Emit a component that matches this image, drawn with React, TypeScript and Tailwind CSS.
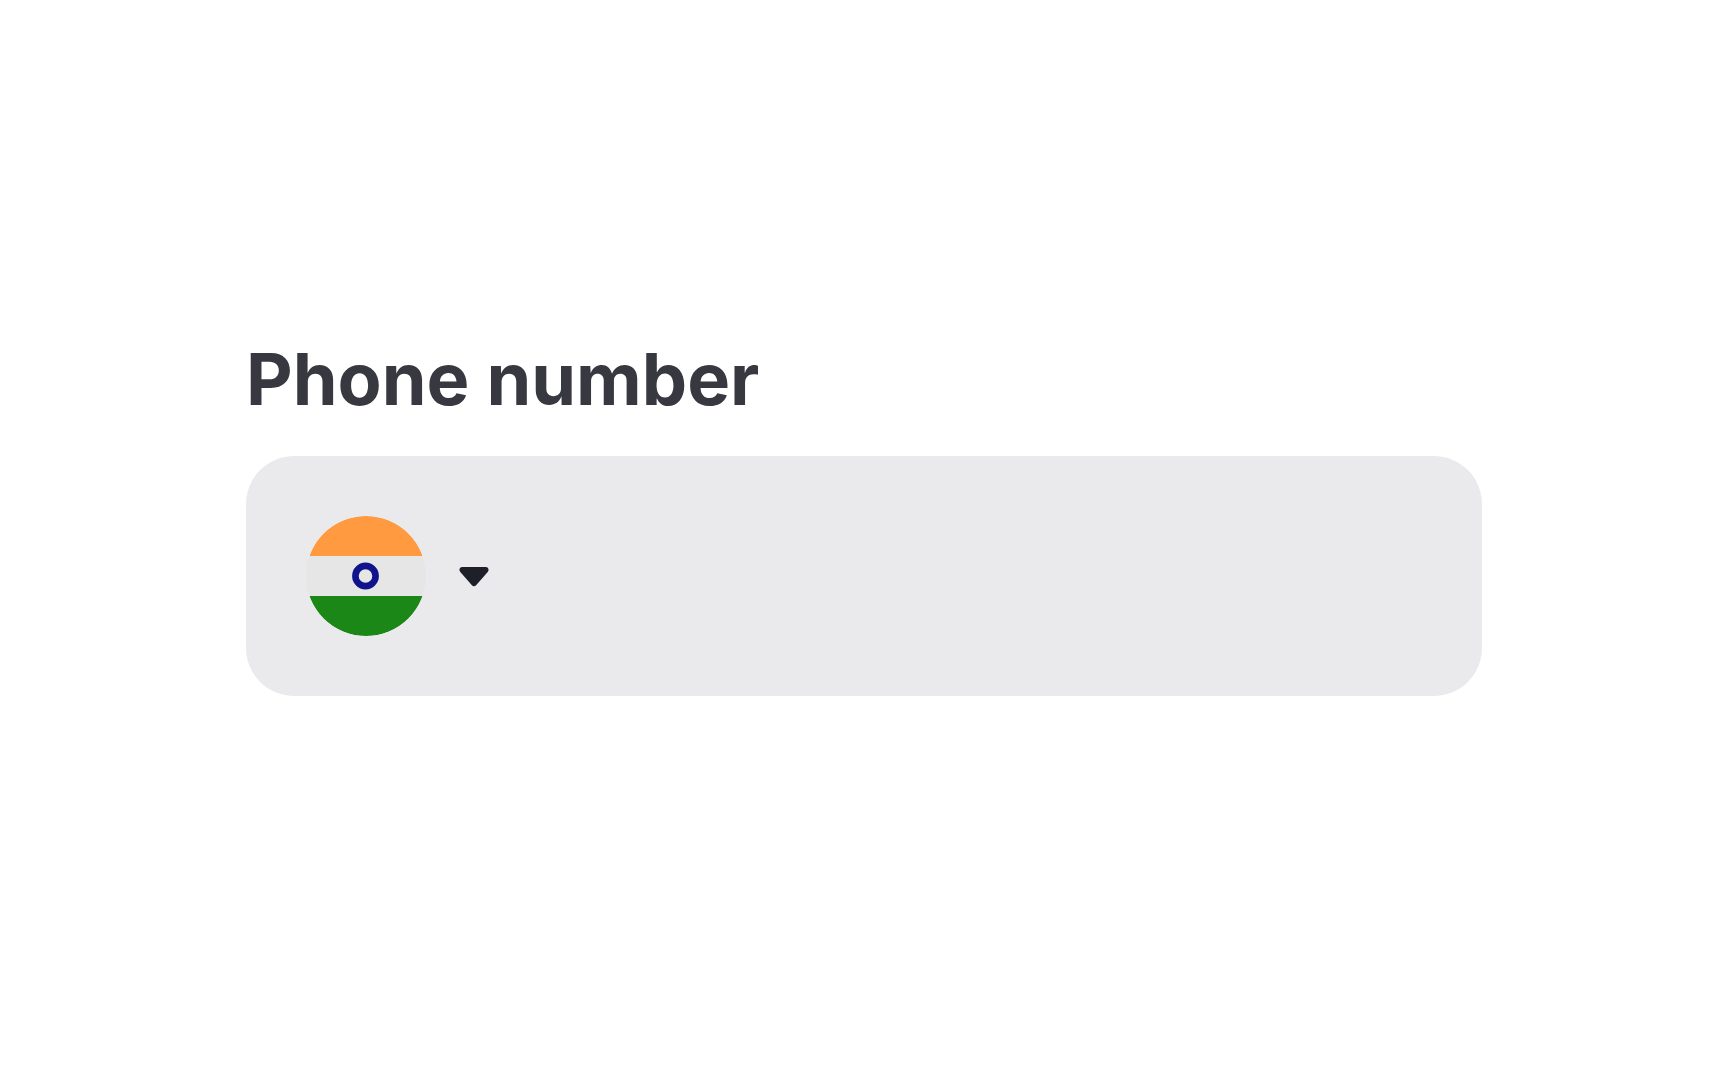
import { useState } from 'react';

function IndiaFlag() {
  return (
    <svg className="size-[120px] shrink-0 rounded-full" viewBox="0 0 120 120" aria-hidden="true">
      <clipPath id="flag-clip">
        <circle cx="60" cy="60" r="60" />
      </clipPath>
      <g clipPath="url(#flag-clip)">
        <rect width="120" height="120" fill="#e6e6e6" />
        <rect width="120" height="40" fill="#ff9a41" />
        <rect y="80" width="120" height="40" fill="#1b8716" />
      </g>
      <circle cx="59.5" cy="60" r="10.1" fill="none" stroke="#10148c" strokeWidth="6.6" />
    </svg>
  );
}

function CaretDown() {
  return (
    <svg className="h-6 w-[30px] shrink-0" viewBox="0 0 30 24" fill="#1f1f29" aria-hidden="true">
      <path d="M3.2 3H26.8C29.4 3 30.4 6 28.7 8L17.1 21.3C16 22.7 14 22.7 12.9 21.3L1.3 8C-.4 6 .6 3 3.2 3Z" />
    </svg>
  );
}

export default function App() {
  const [phone, setPhone] = useState('');

  return (
    <main className="min-h-screen bg-white px-[246px] pt-[336px] font-['Inter',sans-serif]">
      <div className="flex flex-col gap-[34px]">
        <label htmlFor="phone" className="text-[72px] leading-[86px] font-bold text-[#383840]">
          Phone number
        </label>

        <div className="flex items-center gap-6 rounded-[48px] bg-[#eaeaec] p-[60px]">
          {/* Country picker */}
          <button type="button" aria-label="Select country" className="flex items-center gap-[33px]">
            <IndiaFlag />
            <CaretDown />
          </button>

          <input
            id="phone"
            type="tel"
            value={phone}
            onChange={(e) => setPhone(e.target.value)}
            className="min-w-0 flex-1 bg-transparent text-[72px] leading-[86px] text-[#1f1f29] outline-none"
          />
        </div>
      </div>
    </main>
  );
}
